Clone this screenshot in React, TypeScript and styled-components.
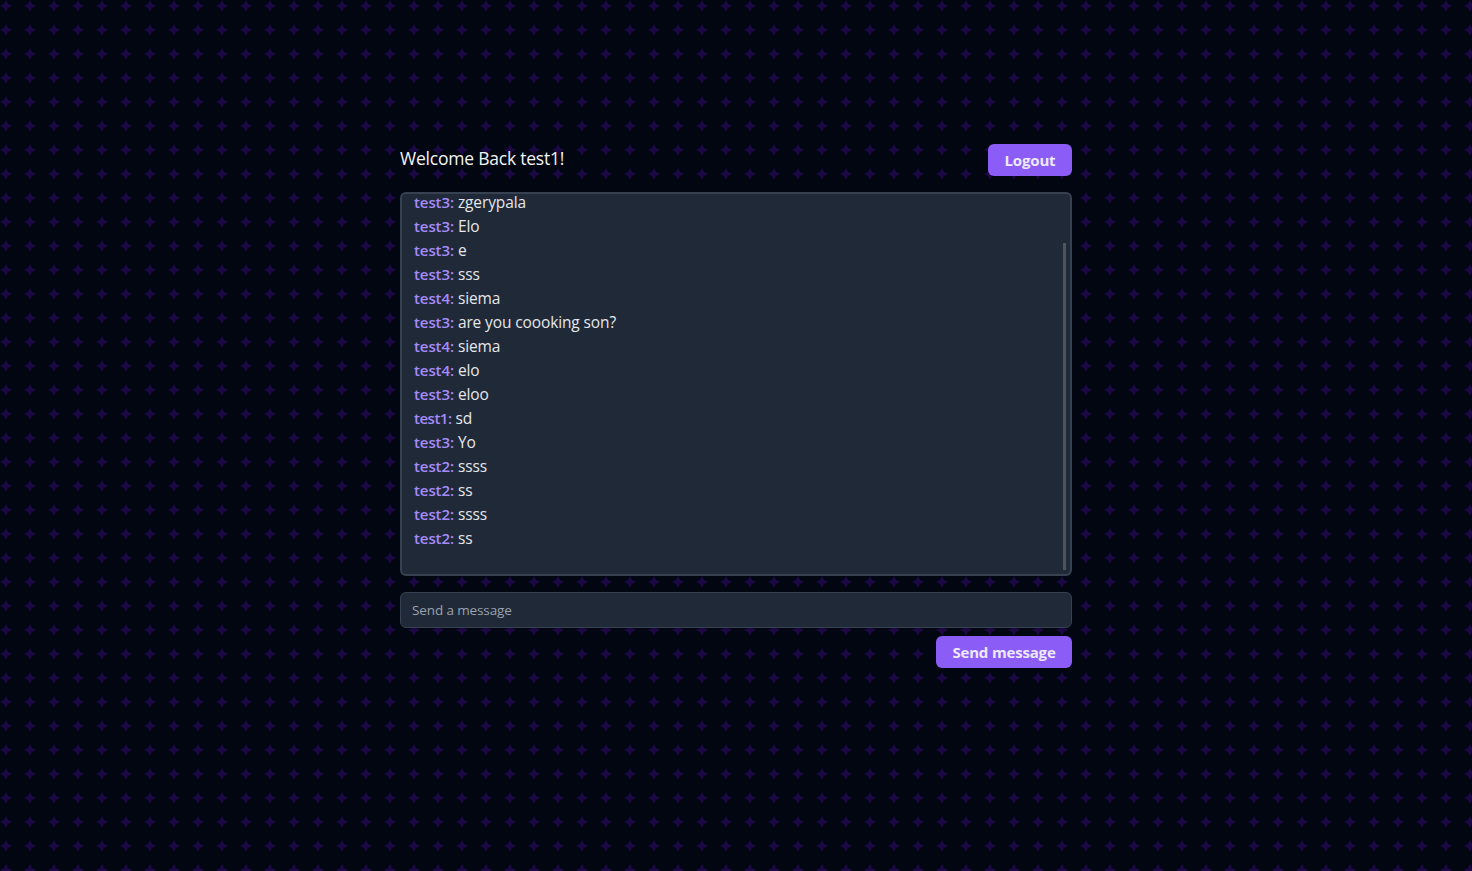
import React from 'react';
import styled, { createGlobalStyle } from 'styled-components';

const star =
  "url(\"data:image/svg+xml,%3Csvg xmlns='http://www.w3.org/2000/svg' width='24' height='24' viewBox='0 0 24 24'%3E%3Cpath fill='%231b0844' d='M8 4l4 2-4 2-2 4-2-4-4-2 4-2 2-4 2 4z'/%3E%3C/svg%3E\")";

const GlobalStyle = createGlobalStyle`
  * { box-sizing: border-box; }
  body {
    margin: 0;
    font-family: 'Segoe UI', 'Open Sans', 'Noto Sans', sans-serif;
    font-size: 16px;
    line-height: 24px;
    color: #e5e7eb;
  }
`;

const Page = styled.main`
  height: 100vh;
  min-height: 871px;
  overflow: hidden;
  padding-top: 144px;
  background: #020611 ${star};
`;

const Chat = styled.section`
  width: 672px;
  margin: 0 auto;
  display: flex;
  flex-direction: column;
`;

const Header = styled.header`
  display: flex;
  justify-content: space-between;
  align-items: flex-start;
  height: 32px;
  margin-bottom: 16px;
`;

const Title = styled.h1`
  margin: 0;
  font-size: 17.5px;
  font-weight: 400;
  line-height: 29px;
  letter-spacing: -0.22px;
  color: #f3f4f6;
  white-space: nowrap;
`;

const Button = styled.button<{ $width: number }>`
  width: ${(p) => p.$width}px;
  height: 32px;
  padding: 0;
  border: 0;
  border-radius: 6px;
  background: #8b5cf6;
  color: #ede9fe;
  font: inherit;
  font-size: 15px;
  font-weight: 700;
  letter-spacing: -0.17px;
  white-space: nowrap;
`;

const Panel = styled.div`
  display: flex;
  align-items: flex-end;
  justify-content: space-between;
  height: 384px;
  overflow: hidden;
  padding: 0 4px 4px 12px;
  border: 2px solid #374151;
  border-radius: 6px;
  background: #1f2937;
`;

const Messages = styled.ul`
  margin: 0 0 20px;
  padding: 0;
  list-style: none;
`;

const Message = styled.li`
  display: flex;
  gap: 4px;
  font-size: 15.5px;
  letter-spacing: -0.12px;
  white-space: nowrap;
`;

const Author = styled.span<{ $narrow: boolean }>`
  color: #a78bfa;
  font-size: 15px;
  font-weight: 600;
  letter-spacing: ${(p) => (p.$narrow ? -0.5 : -0.1)}px;
`;

const ScrollThumb = styled.div`
  width: 3px;
  height: 327px;
  background: #4f5459;
`;

const Form = styled.form`
  display: flex;
  flex-direction: column;
  align-items: flex-end;
  gap: 8px;
  margin-top: 16px;
`;

const Field = styled.input`
  width: 100%;
  height: 36px;
  padding: 0 11px 1px;
  border: 1px solid #374151;
  border-radius: 6px;
  background: #1f2937;
  color: #e5e7eb;
  font: inherit;
  font-size: 13.5px;
  letter-spacing: -0.12px;
  outline: none;
  &::placeholder { color: #9ca3af; opacity: 1; }
`;

const messages: [string, string][] = [
  ['test3', 'zgerypala'],
  ['test3', 'Elo'],
  ['test3', 'e'],
  ['test3', 'sss'],
  ['test4', 'siema'],
  ['test3', 'are you coooking son?'],
  ['test4', 'siema'],
  ['test4', 'elo'],
  ['test3', 'eloo'],
  ['test1', 'sd'],
  ['test3', 'Yo'],
  ['test2', 'ssss'],
  ['test2', 'ss'],
  ['test2', 'ssss'],
  ['test2', 'ss'],
];

export default function App() {
  return (
    <Page>
      <GlobalStyle />
      <Chat>
        <Header>
          <Title>Welcome Back test1!</Title>
          <Button $width={84}>Logout</Button>
        </Header>
        <Panel>
          <Messages>
            {messages.map(([author, text], i) => (
              <Message key={i}>
                <Author $narrow={author.endsWith('1')}>{author}:</Author>
                <span>{text}</span>
              </Message>
            ))}
          </Messages>
          <ScrollThumb />
        </Panel>
        <Form onSubmit={(e) => e.preventDefault()}>
          <Field placeholder="Send a message" />
          <Button $width={136}>Send message</Button>
        </Form>
      </Chat>
    </Page>
  );
}
